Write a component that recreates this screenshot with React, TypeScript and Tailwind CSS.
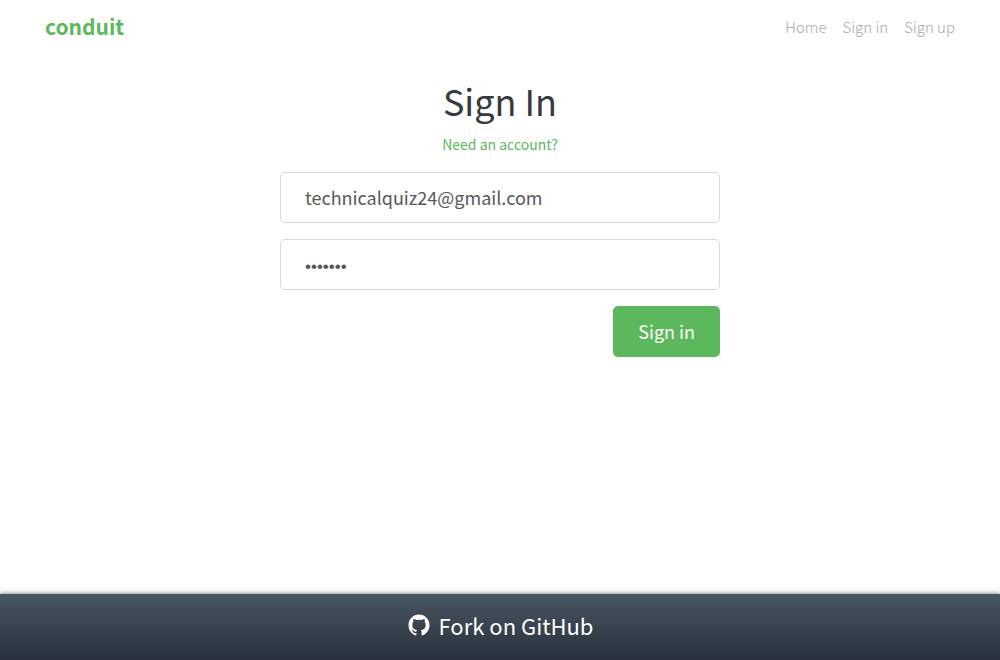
import { useState } from "react";
import { IoLogoGithub } from "react-icons/io5";

const navLinks = ["Home", "Sign in", "Sign up"];

const fieldClass =
  "h-[51px] w-full rounded-[5px] border border-[#d9d9d9] bg-white px-6 text-[#55595c] outline-none focus:border-[#66afe9]";

export default function App() {
  const [email, setEmail] = useState("technicalquiz24@gmail.com");
  const [password, setPassword] = useState("quiz024");

  return (
    <div className="flex min-h-screen flex-col bg-white font-['Noto_Sans_CJK_SC',sans-serif] text-[#373a3c]">
      <header>
        <nav className="flex h-[52px] items-center justify-between px-[45px]">
          <a href="#home" className="text-[21px] leading-7 font-bold text-[#5cb85c]">
            conduit
          </a>
          <ul className="flex gap-4">
            {navLinks.map((label) => (
              <li key={label}>
                <a href="#nav" className="text-[15px] leading-6 font-light text-[#a8a8a8]">
                  {label}
                </a>
              </li>
            ))}
          </ul>
        </nav>
      </header>

      <main className="mx-auto w-full max-w-[440px] flex-1 pt-[26px]">
        <h1 className="text-center text-4xl leading-[44px]">Sign In</h1>
        <p className="mt-2.5 text-center text-sm leading-6">
          <a href="#register" className="text-[#5cb85c]">
            Need an account?
          </a>
        </p>
        <form className="mt-4 flex flex-col gap-4" onSubmit={(e) => e.preventDefault()}>
          <input
            type="email"
            aria-label="Email"
            className={`${fieldClass} pb-0.5 text-lg`}
            value={email}
            onChange={(e) => setEmail(e.target.value)}
          />
          <input
            type="password"
            aria-label="Password"
            className={`${fieldClass} pt-1 font-['Liberation_Sans',sans-serif] text-[17px]`}
            value={password}
            onChange={(e) => setPassword(e.target.value)}
          />
          <button
            type="submit"
            className="h-[51px] self-end rounded-[5px] bg-[#5cb85c] px-[25px] pb-0.5 text-lg text-white"
          >
            Sign in
          </button>
        </form>
      </main>

      <footer className="h-[66px] bg-linear-to-b from-[#485563] to-[#29323c] shadow-[0_0_5px_rgba(0,0,0,0.6)]">
        <a
          href="#github"
          className="flex h-full items-center justify-center gap-2 pb-1 text-[22px] text-white"
        >
          <IoLogoGithub className="size-6" aria-hidden="true" />
          Fork on GitHub
        </a>
      </footer>
    </div>
  );
}
